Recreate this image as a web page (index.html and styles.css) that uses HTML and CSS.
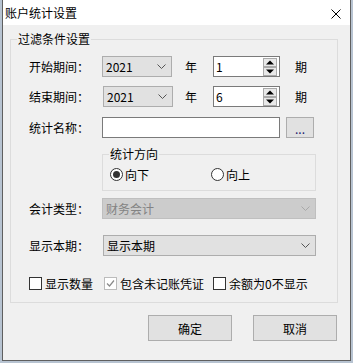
FILE: index.html
```html
<!DOCTYPE html>
<html lang="zh-CN">
<head>
<meta charset="utf-8">
<title>账户统计设置</title>
<link rel="stylesheet" href="styles.css">
</head>
<body>
<div class="window">
  <div class="titlebar">
    <span class="title">账户统计设置</span>
    <svg class="close" width="10" height="10" viewBox="0 0 10 10"><path d="M0.5 0.5 L9.5 9.5 M9.5 0.5 L0.5 9.5" stroke="#000" stroke-width="1" fill="none"/></svg>
  </div>
  <div class="content">
    <fieldset class="group">
      <legend class="legend">过滤条件设置</legend>
      <div class="inner">
        <div class="row r1">
          <span class="label">开始期间：</span>
          <div class="combo small"><span>2021</span><svg width="9" height="5" viewBox="0 0 9 5"><path d="M0.5 0.5 L4.5 4.5 L8.5 0.5" stroke="#555" fill="none"/></svg></div>
          <span class="unit">年</span>
          <div class="spin"><span class="spin-val">1</span><svg class="spin-btns" width="14" height="18" viewBox="0 0 14 18"><rect x="0.5" y="0.5" width="13" height="8" fill="#e8e8e8" stroke="#a9a9a9"/><rect x="0.5" y="9.5" width="13" height="8" fill="#e8e8e8" stroke="#a9a9a9"/><path d="M3 6.5 L7 2.5 L11 6.5Z" fill="#000"/><path d="M3 11.5 L7 15.5 L11 11.5Z" fill="#000"/></svg></div>
          <span class="unit unit2">期</span>
        </div>
        <div class="row r2">
          <span class="label">结束期间：</span>
          <div class="combo small shift"><span>2021</span><svg width="9" height="5" viewBox="0 0 9 5"><path d="M0.5 0.5 L4.5 4.5 L8.5 0.5" stroke="#555" fill="none"/></svg></div>
          <span class="unit unit-s">年</span>
          <div class="spin"><span class="spin-val">6</span><svg class="spin-btns" width="14" height="18" viewBox="0 0 14 18"><rect x="0.5" y="0.5" width="13" height="8" fill="#e8e8e8" stroke="#a9a9a9"/><rect x="0.5" y="9.5" width="13" height="8" fill="#e8e8e8" stroke="#a9a9a9"/><path d="M3 6.5 L7 2.5 L11 6.5Z" fill="#000"/><path d="M3 11.5 L7 15.5 L11 11.5Z" fill="#000"/></svg></div>
          <span class="unit unit2">期</span>
        </div>
        <div class="row r3">
          <span class="label">统计名称：</span>
          <div class="textbox"></div>
          <div class="dots-btn">...</div>
        </div>
        <fieldset class="sub">
          <legend class="sub-legend">统计方向</legend>
          <div class="radios">
            <span class="radio"><span class="circle checked"></span>向下</span>
            <span class="radio radio2"><span class="circle"></span>向上</span>
          </div>
        </fieldset>
        <div class="row r4">
          <span class="label">会计类型：</span>
          <div class="combo wide disabled"><span>财务会计</span><svg width="9" height="5" viewBox="0 0 9 5"><path d="M0.5 0.5 L4.5 4.5 L8.5 0.5" stroke="#a8a8a8" fill="none"/></svg></div>
        </div>
        <div class="row r5">
          <span class="label">显示本期：</span>
          <div class="combo wide shift"><span>显示本期</span><svg width="9" height="5" viewBox="0 0 9 5"><path d="M0.5 0.5 L4.5 4.5 L8.5 0.5" stroke="#555" fill="none"/></svg></div>
        </div>
        <div class="checks">
          <span class="check"><span class="box"></span>显示数量</span>
          <span class="check c2"><span class="box grey"><svg width="11" height="11" viewBox="0 0 11 11"><path d="M2 5.5 L4.5 8 L9 2.5" stroke="#8a8a8a" stroke-width="1.2" fill="none"/></svg></span>包含未记账凭证</span>
          <span class="check c3"><span class="box"></span>余额为0不显示</span>
        </div>
      </div>
    </fieldset>
    <div class="buttons">
      <div class="btn">确定</div>
      <div class="btn">取消</div>
    </div>
  </div>
</div>
</body>
</html>
```
FILE: styles.css
```css
* { box-sizing: border-box; }
body {
  margin: 0;
  background: #b7c3d1;
  font-family: "Noto Sans CJK SC", "Noto Sans", sans-serif;
  font-size: 12px;
  color: #000;
}
.window {
  margin-left: 2px;
  width: 349px;
  height: 361px;
  border: 1px solid #5f5f5f;
  border-top: none;
  background: #f0f0f0;
  display: flex;
  flex-direction: column;
}
.titlebar {
  height: 25px;
  flex: none;
  background: #fff;
  display: flex;
  align-items: center;
  justify-content: space-between;
  padding: 0 9px 0 2px;
}
.title { line-height: 16px; }
.close { margin-top: 2px; }
.content {
  flex: 1;
  padding: 6px 13px 0 7px;
}
.group {
  margin: 0;
  padding: 0 0 11px 0;
  border: 1px solid #dcdcdc;
  width: 328px;
  min-width: 0;
}
.legend {
  margin-left: 6px;
  padding: 0 1px;
  line-height: 16px;
}
.inner { padding-left: 18px; }
.row {
  display: flex;
  align-items: center;
  height: 21px;
}
.r1 { margin-top: 9px; }
.r2 { margin-top: 9px; }
.r3 { margin-top: 10px; }
.r4 { margin-top: 7px; }
.r5 { margin-top: 16px; }
.label {
  width: 73px;
  flex: none;
  white-space: nowrap;
}
.combo {
  height: 21px;
  background: #e1e1e1;
  border: 1px solid #adadad;
  display: flex;
  align-items: center;
  justify-content: space-between;
  padding: 0 5px 0 3px;
}
.combo.small { width: 70px; }
.combo.wide { width: 214px; }
.combo.shift { margin-left: 1px; }
.combo.wide.shift { width: 213px; }
.combo.disabled {
  background: #cccccc;
  border-color: #bfbfbf;
  color: #838383;
}
.unit { margin-left: 13px; width: 12px; }
.unit-s { margin-left: 12px; }
.unit2 { margin-left: 15px; }
.spin {
  margin-left: 16px;
  width: 67px;
  height: 21px;
  background: #fff;
  border: 1px solid #7a7a7a;
  display: flex;
  align-items: center;
  justify-content: space-between;
  padding: 0 2px 0 2px;
}
.textbox {
  width: 178px;
  height: 21px;
  background: #fff;
  border: 1px solid #7a7a7a;
}
.dots-btn {
  margin-left: 6px;
  width: 28px;
  height: 21px;
  background: #e1e1e1;
  border: 1px solid #adadad;
  color: #1a1a6e;
  display: flex;
  justify-content: center;
  align-items: center;
  line-height: 12px;
  padding-top: 3px;
}
.sub {
  margin: 9px 0 0 73px;
  padding: 0 0 8px 0;
  width: 214px;
  min-width: 0;
  border: 1px solid #dcdcdc;
}
.sub-legend {
  margin-left: 6px;
  padding: 0 1px;
  line-height: 14px;
}
.radios {
  margin-top: 5px;
  height: 16px;
  display: flex;
  align-items: center;
  padding-left: 7px;
}
.radio {
  display: flex;
  align-items: center;
  gap: 2px;
}
.radio2 { margin-left: 62px; }
.circle {
  width: 13px;
  height: 13px;
  border-radius: 50%;
  border: 1px solid #333;
  background: #fff;
  display: flex;
  align-items: center;
  justify-content: center;
}
.circle.checked::after {
  content: "";
  width: 7px;
  height: 7px;
  border-radius: 50%;
  background: #333;
}
.checks {
  margin-top: 19px;
  height: 16px;
  display: flex;
  align-items: center;
}
.check {
  display: flex;
  align-items: center;
  gap: 3px;
}
.c2 { margin-left: 11px; }
.c3 { margin-left: 9px; }
.box {
  width: 13px;
  height: 13px;
  border: 1px solid #333;
  background: #fff;
  display: flex;
  align-items: center;
  justify-content: center;
}
.box.grey { border-color: #bcbcbc; }
.buttons {
  margin-top: 12px;
  display: flex;
  justify-content: flex-end;
  gap: 21px;
}
.btn {
  width: 84px;
  height: 26px;
  background: #e1e1e1;
  border: 1px solid #adadad;
  display: flex;
  align-items: center;
  justify-content: center;
}
```
